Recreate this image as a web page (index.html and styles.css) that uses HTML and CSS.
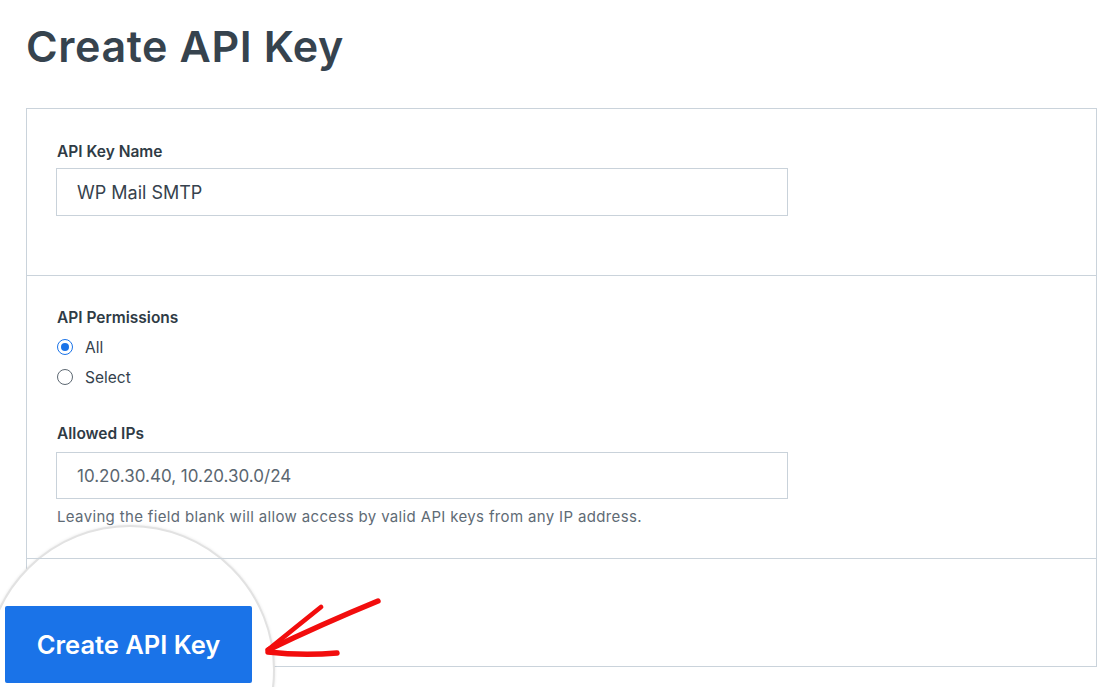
FILE: index.html
```html
<!DOCTYPE html>
<html lang="en">
<head>
<meta charset="utf-8">
<title>Create API Key</title>
<link rel="stylesheet" href="styles.css">
</head>
<body>
<div class="page">
  <h1 class="title">Create API Key</h1>
  <div class="card">
    <section class="section section-name">
      <label class="label">API Key Name</label>
      <div class="input">WP Mail SMTP</div>
    </section>
    <section class="section section-perms">
      <div class="label">API Permissions</div>
      <div class="radios">
        <div class="radio-row"><span class="radio checked"></span><span>All</span></div>
        <div class="radio-row"><span class="radio"></span><span>Select</span></div>
      </div>
      <label class="label label-ips">Allowed IPs</label>
      <div class="input input-ips">10.20.30.40, 10.20.30.0/24</div>
      <p class="help">Leaving the field blank will allow access by valid API keys from any IP address.</p>
    </section>
    <section class="section section-footer"></section>
  </div>

  <div class="magnifier">
    <button class="btn">Create API Key</button>
  </div>

  <svg class="arrow" width="130" height="80" viewBox="260 590 130 80" xmlns="http://www.w3.org/2000/svg">
    <g fill="none" stroke="#f20d0d" stroke-linecap="round" stroke-linejoin="round">
      <path d="M378 601 Q 322 624 268 650" stroke-width="5.4"/>
      <path d="M321 607 Q 296 627 269 649" stroke-width="4.8"/>
      <path d="M268 652 Q 302 656 337 653" stroke-width="5.4"/>
    </g>
  </svg>
</div>
</body>
</html>
```

FILE: styles.css
```css
* { box-sizing: border-box; }

html, body {
  margin: 0;
  padding: 0;
  background: #ffffff;
}

body {
  font-family: "Inter", "Noto Sans", "Liberation Sans", sans-serif;
  color: #34414c;
  overflow: hidden;
}

.page {
  position: relative;
  width: 1116px;
  height: 687px;
  overflow: hidden;
  padding: 0 19px 0 26px;
}

.title {
  margin: 0;
  padding-top: 19px;
  height: 108px;
  font-size: 43px;
  line-height: 54px;
  font-weight: 600;
  letter-spacing: 0.6px;
  color: #36434e;
}

.card {
  position: relative;
  width: 1071px;
  border: 1px solid #cad3db;
}

.section {
  padding-left: 29px;
  padding-right: 29px;
}

.section + .section {
  border-top: 1px solid #cad3db;
}

.section-name {
  padding-top: 33px;
  height: 166px;
}

.label {
  display: block;
  font-size: 15.5px;
  line-height: 20px;
  font-weight: 600;
  color: #2f3b45;
  padding-left: 1px;
}

.input {
  margin-top: 6px;
  width: 732px;
  height: 48px;
  border: 1px solid #c9d2da;
  padding: 0 20px;
  display: flex;
  align-items: center;
  font-size: 18px;
  color: #36424d;
}

.section-perms {
  padding-top: 32px;
  height: 283px;
}

.radios {
  display: flex;
  flex-direction: column;
  margin-top: 4px;
  padding-left: 1px;
}

.radio-row {
  height: 30px;
  display: flex;
  align-items: center;
  gap: 12px;
  font-size: 15.5px;
  color: #34414c;
}

.radio {
  width: 16px;
  height: 16px;
  border-radius: 50%;
  border: 1.5px solid #5d6872;
  display: inline-flex;
  align-items: center;
  justify-content: center;
}

.radio.checked {
  border-color: #1a73e8;
}

.radio.checked::after {
  content: "";
  width: 8px;
  height: 8px;
  border-radius: 50%;
  background: #1a73e8;
}

.label-ips {
  margin-top: 32px;
}

.input-ips {
  margin-top: 8px;
  height: 47px;
  font-size: 17px;
  color: #5a6670;
}

.help {
  margin: 8px 0 0;
  padding-left: 1px;
  font-size: 15px;
  line-height: 20px;
  letter-spacing: 0.35px;
  color: #5f6b75;
}

.section-footer {
  height: 108px;
  position: relative;
}

.section-footer::before {
  content: "";
  position: absolute;
  left: 0;
  right: 0;
  top: -1px;
  height: 1px;
  background: #cad3db;
  z-index: 3;
}

.magnifier {
  position: absolute;
  left: -15px;
  top: 525px;
  width: 290px;
  height: 290px;
  border-radius: 50%;
  background: #ffffff;
  border: 2px solid #e2e2e2;
  box-shadow: 0 0 3px rgba(0, 0, 0, 0.1);
  z-index: 2;
  padding: 79px 0 0 18px;
}

.btn {
  display: block;
  width: 247px;
  height: 77px;
  border: none;
  border-radius: 2px;
  background: #1a73e8;
  color: #ffffff;
  font-family: "Inter", "Noto Sans", "Liberation Sans", sans-serif;
  font-size: 25.5px;
  font-weight: 600;
  letter-spacing: 0;
  padding: 0;
  cursor: pointer;
}

.arrow {
  position: absolute;
  left: 260px;
  top: 590px;
  z-index: 4;
}
```
